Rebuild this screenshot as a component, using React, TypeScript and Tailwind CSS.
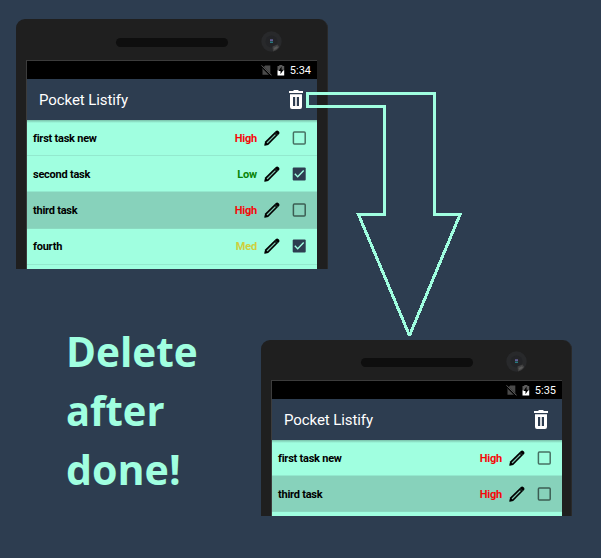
type Priority = "High" | "Low" | "Med";

interface Task {
  name: string;
  priority: Priority;
  done?: boolean;
  shaded?: boolean;
}

const priorityColor: Record<Priority, string> = {
  High: "text-[#f60808]",
  Low: "text-[#078407]",
  Med: "text-[#cfcf3c]",
};

function Pencil() {
  return (
    <svg className="h-4 w-4 shrink-0" viewBox="0 0 16 16" fill="none">
      <path
        d="M1.1 11.6 L11.6 1.2 Q13.2 -.2 14.6 1.2 Q16.2 2.8 14.8 4.3 L4.2 15 L.9 15.8 Q.2 15.8 .3 15 Z"
        fill="#000"
      />
      <path d="M3 13 L11.4 4.6" stroke="#7cc4ae" strokeWidth="1.3" />
      <path d="M11 2.4 L13.7 5.1" stroke="#4b8172" strokeWidth=".5" />
    </svg>
  );
}

function Checkbox({ checked }: { checked?: boolean }) {
  return (
    <svg className="ml-[12px] h-[14px] w-[14px] shrink-0" viewBox="0 0 14 14" fill="none">
      {checked ? (
        <>
          <rect x=".7" y=".5" width="13" height="13" rx="1" fill="#2d3d50" />
          <path d="M2.8 6.8 L5.7 9.7 L11.7 3.6" stroke="#a0ffe0" strokeWidth="1.4" />
        </>
      ) : (
        <rect x="1.4" y="1.1" width="11.8" height="11.8" rx="1" stroke="#000" strokeOpacity=".56" strokeWidth="1.5" />
      )}
    </svg>
  );
}

function TaskRow({ task }: { task: Task }) {
  return (
    <div
      className={`flex h-[36.2px] items-center border-b pl-[6px] pr-[11px] text-[11px] font-bold text-black ${
        task.shaded ? "border-[#8bd9c0] bg-[#87d2bb]" : "border-[#93e9ce] bg-[#a0ffe0]"
      }`}
    >
      <span className="flex-1 pt-[3px] tracking-[-0.24px]">{task.name}</span>
      <span className={`mr-[7px] pt-[3px] tracking-[-0.2px] ${priorityColor[task.priority]}`}>{task.priority}</span>
      <Pencil />
      <Checkbox checked={task.done} />
    </div>
  );
}

function StatusBar({ time }: { time: string }) {
  return (
    <div className="flex h-[18px] items-center justify-end bg-black pr-[6px] text-white">
      <svg className="mr-[5px] h-[11px] w-[11px]" viewBox="0 0 11 11">
        <path d="M4.2 .6 H9.3 V9.8 H1.5 V3.3 Z" fill="#4a4a4a" />
        <path d="M.2 .8 L10.2 10.8" stroke="#000" strokeWidth="2" />
        <path d="M.6 .4 L10.6 10.4" stroke="#686868" strokeWidth="1" />
      </svg>
      <svg className="mr-[5px] h-[11px] w-[8px]" viewBox="0 0 8 11">
        <path d="M.5 1 H2.3 V0 H5.4 V1 H7.2 V6 H.5 Z" fill="#5c5c5c" />
        <path d="M.5 5.5 H7.2 V10.6 H.5 Z" fill="#fff" />
        <path d="M4.6 1.5 L1.5 6 H3.5 V9.3 L6.5 4.8 H4.6 Z" fill="#000" />
      </svg>
      <span className="pt-[2px] text-[11px] leading-[18px]">{time}</span>
    </div>
  );
}

function Trash() {
  return (
    <svg className="h-[19px] w-[14px]" viewBox="0 0 14 19">
      <path d="M0 1 H4.2 Q4.5 0 5.2 0 H8.8 Q9.5 0 9.8 1 H14 V3 H0 Z" fill="#fff" />
      <path
        d="M1 4.2 H13 V17 Q13 19 11 19 H3 Q1 19 1 17 Z M4 7 V16 H6.2 V7 Z M7.8 7 V16 H10 V7 Z"
        fill="#fff"
        fillRule="evenodd"
      />
    </svg>
  );
}

function Camera() {
  return (
    <svg className="h-[21px] w-[21px]" viewBox="0 0 21 21">
      <circle cx="10.5" cy="10.5" r="10.2" fill="#28292b" />
      <circle cx="10.5" cy="10.5" r="6" fill="#232427" />
      <path d="M11.5 15.5 L16.5 13.5 L18.4 16 Q16 19.6 12 20.5 Z" fill="#414141" />
      <path d="M12.5 17 L16 15.2 L17 16.8 L13.5 19 Z" fill="#585858" />
      <path d="M9 8.3 H12 V10 H9 Z" fill="#656097" />
      <path d="M9 10.6 H12 V12 H9 Z" fill="#28777f" />
    </svg>
  );
}

interface PhoneProps {
  time: string;
  tasks: Task[];
  className: string;
  bezelClassName: string;
}

function Phone({ time, tasks, className, bezelClassName }: PhoneProps) {
  return (
    <section
      className={`flex shrink-0 flex-col overflow-hidden rounded-t-[9px] border-r border-[#292929] bg-[#1f1f1f] pl-[10px] ${className}`}
    >
      <div className={`flex shrink-0 items-start pl-[90px] ${bezelClassName}`}>
        <div className="mt-[7px] h-[9px] w-[112px] rounded-full bg-[#0e0e0e]" />
        <div className="ml-[33px]">
          <Camera />
        </div>
      </div>
      <div className="min-h-0 flex-1 border-l border-t border-[#3c3c3c] bg-[#a0ffe0]">
        <StatusBar time={time} />
        <header className="flex h-[41px] items-center justify-between bg-[#2d3d50] pl-[12px] pr-[14px] text-[15px] text-white">
          <h1 className="pt-px tracking-[-0.08px]">Pocket Listify</h1>
          <Trash />
        </header>
        <div className="relative -mb-[3px] h-[3px] bg-linear-to-b from-black/25 to-transparent" />
        <div>
          {tasks.map((task) => (
            <TaskRow key={task.name} task={task} />
          ))}
        </div>
      </div>
    </section>
  );
}

const before: Task[] = [
  { name: "first task new", priority: "High" },
  { name: "second task", priority: "Low", done: true },
  { name: "third task", priority: "High", shaded: true },
  { name: "fourth", priority: "Med", done: true },
];

const after: Task[] = [
  { name: "first task new", priority: "High" },
  { name: "third task", priority: "High", shaded: true },
];

export default function App() {
  return (
    <main className="relative h-[558px] w-[601px] overflow-hidden bg-[#2d3d50] pl-[16px] pt-[19px] font-['Roboto',sans-serif]">
      <Phone
        time="5:34"
        tasks={before}
        className="h-[250px] w-[312px] pr-[10px]"
        bezelClassName="h-[41px] pt-[12px]"
      />
      <div className="flex pt-[52px]">
        <h2 className="w-[245px] shrink-0 pl-[50px] font-['Open_Sans',sans-serif] text-[42px] font-bold leading-[59px] text-[#a0ffe0]">
          <span className="block w-fit origin-left scale-x-[0.965]">Delete</span>
          <span className="block w-fit origin-left scale-x-[0.95]">after</span>
          <span className="block w-fit origin-left scale-x-[0.98]">done!</span>
        </h2>
        <Phone
          time="5:35"
          tasks={after}
          className="mt-[19px] h-[176px] w-[311px] pr-[9px]"
          bezelClassName="h-[40px] pt-[11px]"
        />
      </div>
      <svg
        className="pointer-events-none absolute left-0 top-0 h-[558px] w-[601px]"
        viewBox="0 0 601 558"
        fill="none"
        shapeRendering="crispEdges"
      >
        <path
          d="M307.5 93.5 H434.5 V214.5 H460 L409.5 335.5 L358.5 214.5 H384.5 V106.5 H307.5 Z"
          stroke="#a0ffe0"
          strokeWidth="3"
          strokeLinejoin="miter"
          strokeMiterlimit="2"
        />
      </svg>
    </main>
  );
}
